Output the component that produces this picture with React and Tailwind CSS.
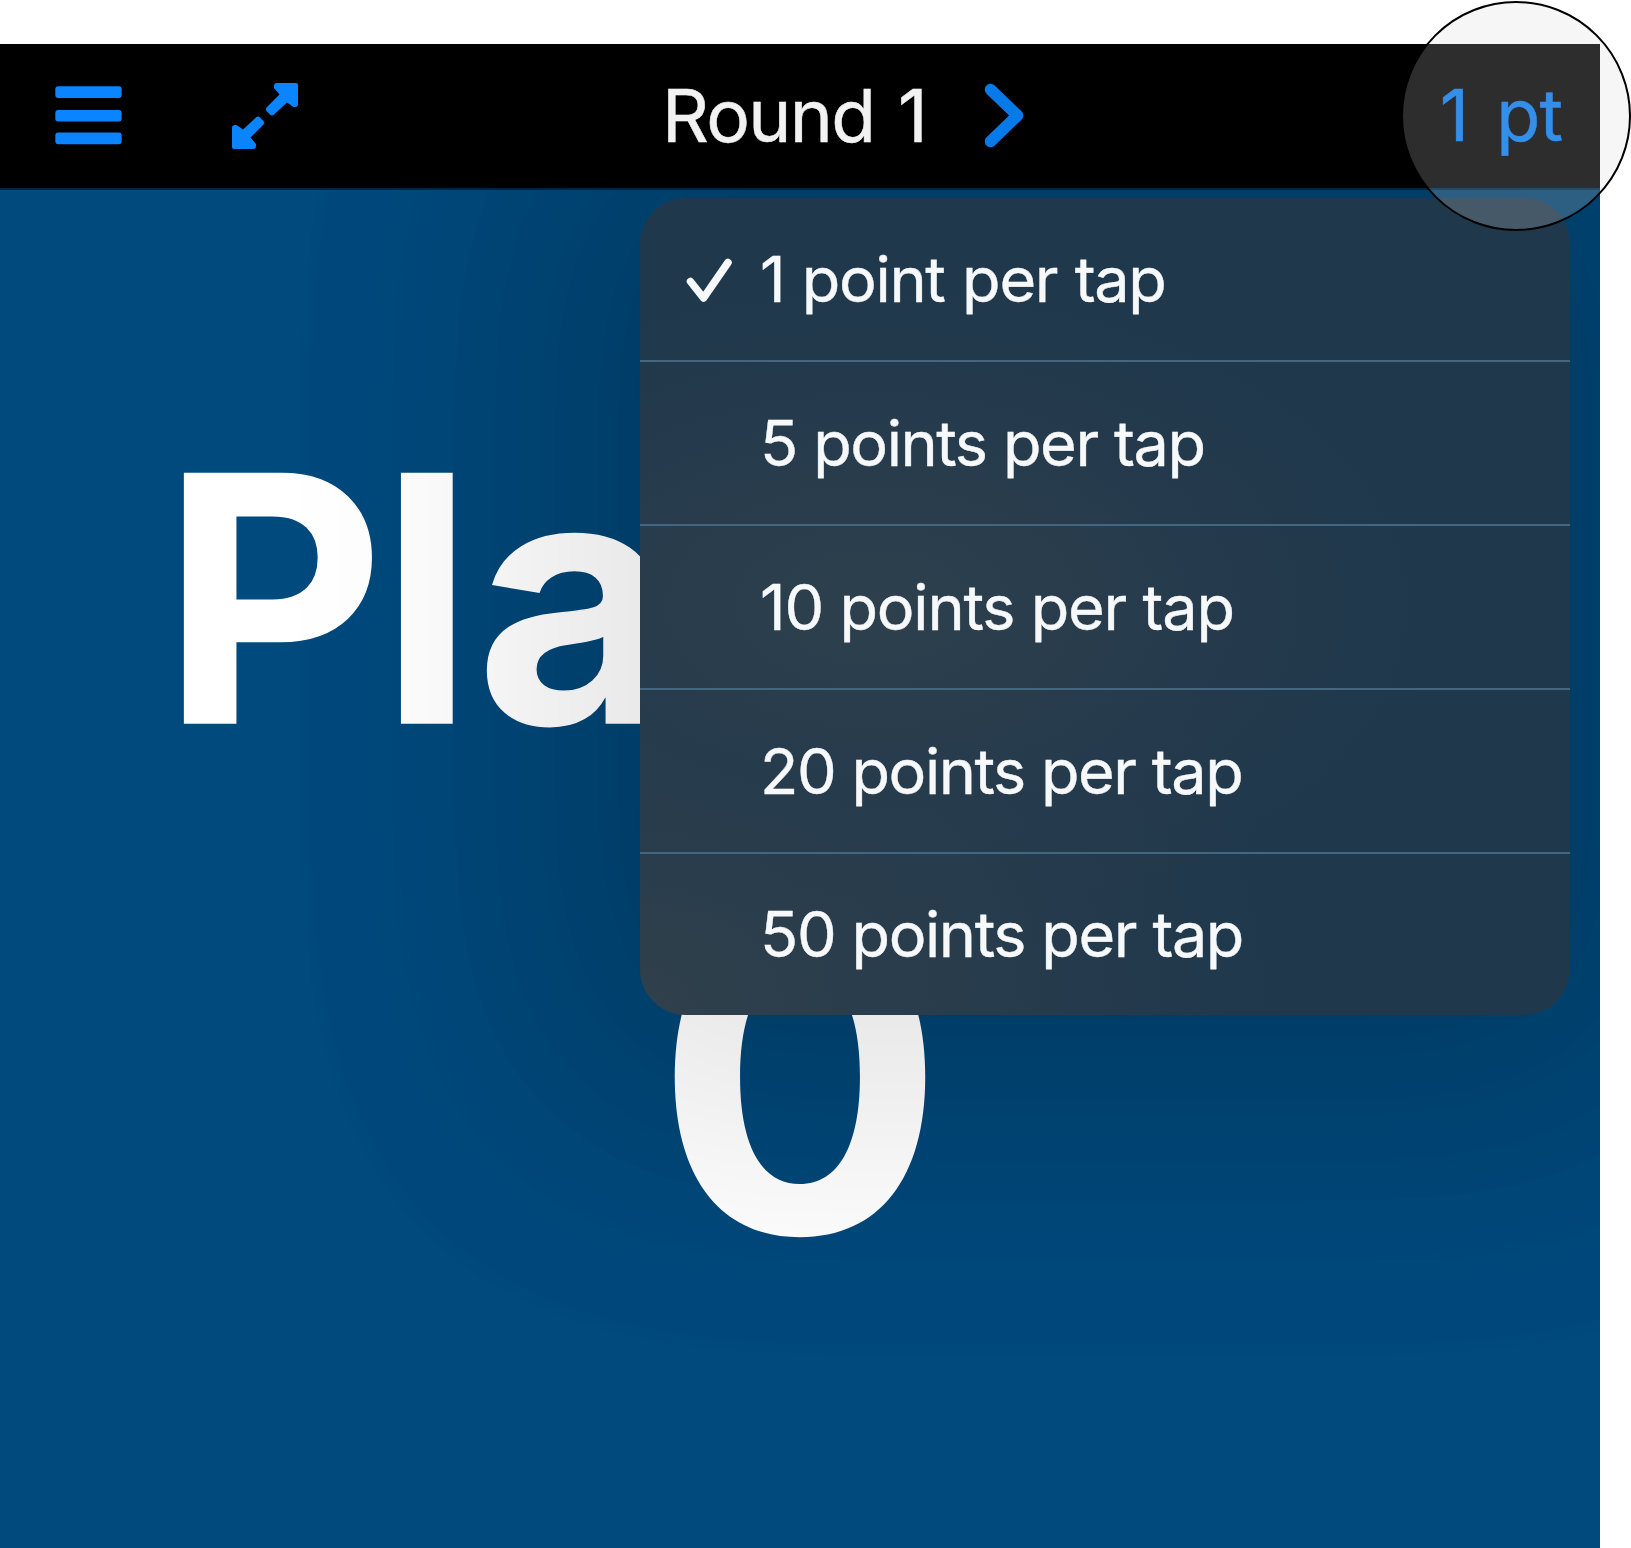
const options = [
  { label: "1 point per tap", selected: true, spacing: "tracking-[-1.3px] [word-spacing:1px]" },
  { label: "5 points per tap", spacing: "tracking-[-1.43px]" },
  { label: "10 points per tap", spacing: "tracking-[-1.22px]" },
  { label: "20 points per tap", spacing: "tracking-[-1.47px]" },
  { label: "50 points per tap", spacing: "tracking-[-1.42px]" },
];

function MenuIcon() {
  return (
    <svg className="h-[60px] w-[68px] shrink-0" viewBox="0 0 68 60" fill="#0a84ff">
      <rect x="0.300" y="0.300" width="66.400" height="11.600" rx="3" />
      <rect x="0.300" y="24" width="66.400" height="11.600" rx="3" />
      <rect x="0.300" y="46.600" width="66.400" height="11.600" rx="3" />
    </svg>
  );
}

const arrow =
  "M46 1H65Q67 1 67 3V22Q67 25 64 25H62.5L56 20.5L42.5 33Q40.5 34 39 32.500L35.500 29Q34 27 35.500 25.500L48.500 12.500L43 6V4Q43 1 46 1Z";

function ExpandIcon() {
  return (
    <svg className="h-[68px] w-[68px] shrink-0" viewBox="0 0 68 68" fill="#0a84ff">
      <path d={arrow} />
      <path d={arrow} transform="rotate(180 34 34)" />
    </svg>
  );
}

function ChevronIcon() {
  return (
    <svg className="h-[66px] w-[42px] shrink-0" viewBox="0 0 42 66" fill="none">
      <path d="M7.500 6.500L34.500 32.500L7.500 58.500" stroke="#067ae8" strokeWidth="11.500" strokeLinecap="round" strokeLinejoin="round" />
    </svg>
  );
}

function CheckIcon() {
  return (
    <svg className="mt-[4px] h-[48px] w-[48px] shrink-0" viewBox="0 0 48 48" fill="none">
      <path d="M4.500 24.500L17.500 41L42 5.500" stroke="#f7f8fa" strokeWidth="7.500" strokeLinecap="round" strokeLinejoin="round" />
    </svg>
  );
}

export default function App() {
  return (
    <div className="relative h-[1548px] w-[1631px] overflow-hidden bg-white pt-[44px] font-['Inter',sans-serif]">
      <div className="relative flex h-[1504px] w-[1600px] flex-col overflow-hidden bg-[#004a7d]">
        <header className="relative z-10 flex h-[146px] shrink-0 items-center border-b-2 border-[#00243e] bg-black pl-[55px]">
          <MenuIcon />
          <div className="-mt-[1px] ml-[108px]">
            <ExpandIcon />
          </div>
          <h1 className="-mt-[2px] ml-[363px] w-[321px] whitespace-nowrap text-[73px] leading-none tracking-[-1.7px] text-[#f2f2f2] [-webkit-text-stroke:0.5px] [word-spacing:5px]">Round 1</h1>
          <ChevronIcon />
          <span className="-mt-[2px] ml-auto mr-[38px] whitespace-nowrap text-[72px] leading-none tracking-[-1px] text-[#0a7df0] [-webkit-text-stroke:0.5px] [word-spacing:9px]">1 pt</span>
        </header>
        <div className="absolute left-[640px] top-[154px] h-[817px] w-[930px] rounded-[46px] shadow-[0_0_400px_120px_rgba(0,0,0,0.09)]" />
        <main className="relative flex grow flex-col">
          <div className="mt-[209px] pl-[162px] text-[343px] font-bold leading-[400px] tracking-[-4px] text-white [-webkit-text-stroke:1.500px]">
            P<span className="tracking-[3px]">l</span>a
          </div>
          <div className="mt-[28px] text-center text-[430px] font-bold leading-[500px] text-white">0</div>
        </main>
        <div className="absolute left-[640px] top-[154px] h-[817px] w-[930px] rounded-[46px] shadow-[0_0_360px_120px_rgba(0,0,0,0.1)]" />
        <div className="absolute left-[640px] top-[154px] flex h-[817px] w-[930px] flex-col overflow-hidden rounded-[46px] bg-[#1f384c] bg-[radial-gradient(ellipse_at_25%_50%,#2e404d_0%,#263b4c_30%,transparent_58%),radial-gradient(ellipse_at_0%_100%,#30404c_0%,transparent_50%)]">
          {options.map((o, i) => (
            <div
              key={o.label}
              className={
                i < options.length - 1
                  ? "flex h-[164px] shrink-0 items-center border-b-2 border-[#44667f] pl-[46px]"
                  : "flex h-[161px] shrink-0 items-center pl-[46px]"
              }
            >
              <div className="w-[74px]">{o.selected && <CheckIcon />}</div>
              <span className={`whitespace-nowrap text-[63px] leading-none text-[#f7f8fa] [-webkit-text-stroke:0.4px] ${o.spacing}`}>{o.label}</span>
            </div>
          ))}
        </div>
      </div>
      <div className="absolute left-[1401px] top-[1px] z-20 size-[230px] rounded-full border-2 border-black bg-[#d4d4d4]/21" />
    </div>
  );
}
